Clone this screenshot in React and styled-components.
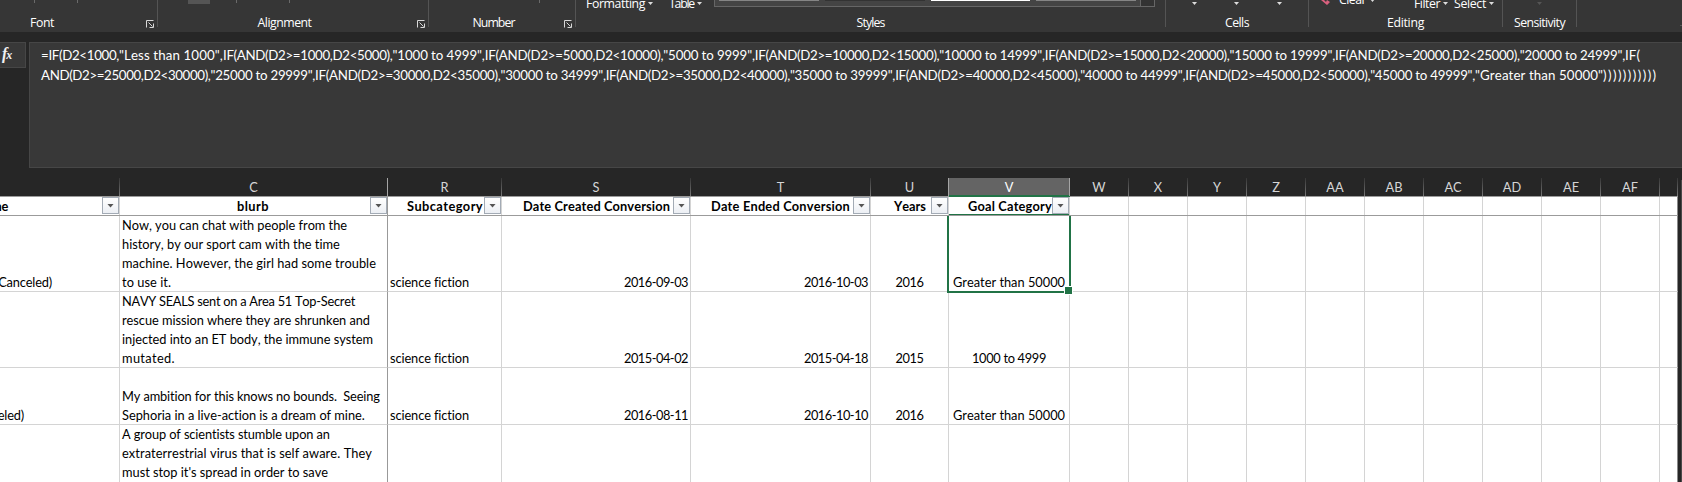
import React, { useLayoutEffect, useRef, useState } from "react";
import styled, { createGlobalStyle } from "styled-components";

const Global = createGlobalStyle`
  * { box-sizing: border-box; }
  html, body { margin: 0; background: #262626; overflow: hidden; }
`;

const Window = styled.div`
  width: 1682px;
  height: 482px;
  overflow: hidden;
  display: flex;
  flex-direction: column;
  background: #262626;
  font-family: Lato, sans-serif;
  font-kerning: none;
`;

/* text whose tracking is tuned so that it fills a known advance width */
const Tracked = styled.span`
  display: inline-block;
  white-space: pre;
`;
function Fit({ w, children }) {
  const ref = useRef(null);
  const [ls, setLs] = useState(0);
  useLayoutEffect(() => {
    const natural = ref.current.getBoundingClientRect().width;
    setLs((w - natural) / String(children).length);
  }, []);
  return <Tracked ref={ref} style={{ letterSpacing: ls + "px" }}>{children}</Tracked>;
}

/* ---------- ribbon ---------- */
const Ribbon = styled.div`
  display: flex;
  height: 32px;
  flex: none;
  background: #363636;
  color: #fff;
  font-family: "Open Sans", "Noto Sans", sans-serif;
  font-size: 12.3px;
`;
const Group = styled.div`
  flex: none;
  width: ${(p) => p.$w}px;
  margin-left: ${(p) => p.$ml || 0}px;
  height: 27px;
  border-right: 1px solid #545454;
  display: flex;
  flex-direction: column;
`;
const Tools = styled.div`
  height: 15px;
  display: flex;
  align-items: flex-start;
  overflow: hidden;
`;
const GroupFoot = styled.div`
  display: flex;
  height: 12px;
  align-items: center;
`;
const GroupName = styled.div`
  flex: 1;
  text-align: center;
  line-height: 16px;
  margin-top: 4px;
`;
const Launcher = styled.svg`
  width: 8px;
  height: 8px;
  margin: 5px 3px 0 6px;
  flex: none;
`;
const Tick = styled.i`
  width: 1px;
  height: 3px;
  background: #6a6a6a;
  margin-left: ${(p) => p.$ml}px;
`;
const Pressed = styled.i`
  width: 22px;
  height: 4px;
  background: #555;
  margin-left: ${(p) => p.$ml}px;
`;
const ToolLabel = styled.span`
  line-height: 16px;
  margin-top: ${(p) => p.$mt ?? -4}px;
  margin-left: ${(p) => p.$ml}px;
`;
const Caret = styled.i`
  width: 5px;
  height: 3px;
  background: ${(p) => (p.$dim ? "#555" : "#dcdcdc")};
  clip-path: polygon(0 0, 100% 0, 50% 100%);
  margin-left: ${(p) => p.$ml}px;
  margin-top: ${(p) => p.$mt ?? 2}px;
`;
const Gallery = styled.div`
  display: flex;
  width: 441px;
  height: 7px;
  margin-left: ${(p) => p.$ml}px;
  padding-left: 4px;
  gap: 6px;
  background: #444;
  border: 1px solid #666;
  border-top: 0;
`;
const Swatch = styled.i`
  width: 100px;
  height: 1px;
  background: ${(p) => p.$c};
`;
const GalleryMore = styled.i`
  width: 14px;
  margin-left: -2px;
  background: #333;
  border-left: 1px solid #666;
`;
const Eraser = styled.svg`
  width: 9px;
  height: 5px;
  margin-left: 12px;
`;
const Collapse = styled.svg`
  width: 8px;
  height: 5px;
  margin: 23px 0 0 103px;
`;

const LauncherIcon = () => (
  <Launcher viewBox="0 0 8 8" fill="none" stroke="#d8d8d8">
    <path d="M0.5 7.5V0.5H7.5M2.5 2.5L6.5 6.5M3.5 7.5H7.5V3.5" />
  </Launcher>
);

function RibbonGroup({ name, nameW, w, ml, launcher, children }) {
  return (
    <Group $w={w} $ml={ml}>
      <Tools>{children}</Tools>
      <GroupFoot>
        <GroupName><Fit w={nameW}>{name}</Fit></GroupName>
        {launcher && <LauncherIcon />}
      </GroupFoot>
    </Group>
  );
}

/* ---------- formula bar ---------- */
const FormulaBar = styled.div`
  display: flex;
  flex: none;
  height: 126px;
  margin-top: 10px;
`;
const Fx = styled.div`
  width: 26px;
  height: 26px;
  background: #383838;
  border: 1px solid #464646;
  border-left: 0;
  color: #f0f0f0;
  font: italic bold 16px/21px "Liberation Serif", serif;
  padding-left: 2px;
  margin-right: 3px;
  white-space: nowrap;
  sub { font-size: 12px; line-height: 0; vertical-align: 0; margin-left: -1px; }
`;
const FormulaBox = styled.div`
  flex: 1;
  background: #383838;
  border: 1px solid #464646;
  border-right: 0;
  color: #fff;
  font-size: 13.3px;
  line-height: 20px;
  padding: 2px 0 0 11px;
`;
const FormulaLine = styled.div`
  display: flex;
  height: 20px;
  white-space: pre;
`;

const formula = [
  [
    ["=IF(D2<1000,", 78],
    ['"Less than 1000",', 104],
    ["IF(AND(D2>=1000,D2<5000),", 169.5],
    ['"1000 to 4999",', 92.3],
    ["IF(AND(D2>=5000,D2<10000),", 178.5],
    ['"5000 to 9999",', 91.5],
    ["IF(AND(D2>=10000,D2<15000),", 184.5],
    ['"10000 to 14999",', 105.5],
    ["IF(AND(D2>=15000,D2<20000),", 184.7],
    ['"15000 to 19999",', 105.5],
    ["IF(AND(D2>=20000,D2<25000),", 184.7],
    ['"20000 to 24999",', 105.3],
    ["IF(", 15],
  ],
  [
    ["AND(D2>=25000,D2<30000),", 169.5],
    ['"25000 to 29999",', 104.6],
    ["IF(AND(D2>=30000,D2<35000),", 185.4],
    ['"30000 to 34999",', 105.2],
    ["IF(AND(D2>=35000,D2<40000),", 184.2],
    ['"35000 to 39999",', 105.2],
    ["IF(AND(D2>=40000,D2<45000),", 185],
    ['"40000 to 44999",', 105.2],
    ["IF(AND(D2>=45000,D2<50000),", 184.8],
    ['"45000 to 49999",', 104.9],
    ['"Greater than 50000"', 128],
    [")))))))))))", 54.5],
  ],
];

/* ---------- sheet ---------- */
const Sheet = styled.div`
  display: flex;
  flex: none;
  height: 304px;
  margin-top: 10px;
`;
const Grid = styled.div`
  width: 1678px;
  height: 304px;
  overflow: hidden;
  font-size: 12.8px;
  line-height: 19px;
  color: #000;
`;
const ScrollEdge = styled.div`
  width: 4px;
  margin-top: 2px;
  border-right: 1px solid #4a4a4a;
`;
const Row = styled.div`
  display: grid;
  grid-template-columns: 120px 268px 114px 189px 180px 78px 121px repeat(10, 59px) 18px;
  grid-template-rows: 100%;
  height: ${(p) => p.$h}px;
`;
const Letter = styled.div`
  display: flex;
  align-items: center;
  justify-content: center;
  padding-top: 1px;
  color: ${(p) => (p.$active ? "#fff" : "#d6d6d6")};
  background: ${(p) => (p.$active ? "#646464" : "transparent")};
  border-right: 1px solid;
  border-image: ${(p) =>
    p.$solid ? "linear-gradient(#a5a5a5, #a5a5a5) 1" : "linear-gradient(#333, #7a7a7a) 1"};
  box-shadow: ${(p) => (p.$active ? "inset 0 -1px #217346" : "none")};
`;
const HeadRow = styled(Row)`
  background: #fff;
  border-top: 1px solid #9b9b9b;
  border-bottom: 1px solid #9b9b9b;
  font-weight: bold;
`;
const lineColor = (p) => (p.$freeze ? "#999" : p.$edge ? "#8a8a8a" : "#d4d4d4");
const HeadCell = styled.div`
  position: relative;
  display: flex;
  justify-content: flex-end;
  border-right: 1px solid ${lineColor};
  padding-right: ${(p) => p.$pr || 0}px;
  box-shadow: ${(p) => (p.$active ? "0 -1px #217346, inset 0 -1px #217346" : "none")};
  white-space: pre;
`;
const FilterButton = styled.span`
  position: absolute;
  right: 0;
  top: 0;
  width: 17px;
  height: 17px;
  border: 1px solid #a3abb5;
  background: linear-gradient(#fff, #eceff4);
  display: flex;
  align-items: center;
  justify-content: center;
  &::after {
    content: "";
    width: 7px;
    height: 4px;
    background: #555;
    clip-path: polygon(0 0, 100% 0, 50% 100%);
  }
`;
const Cell = styled.div`
  position: relative;
  display: flex;
  flex-direction: column;
  justify-content: ${(p) => (p.$top ? "flex-start" : "flex-end")};
  align-items: ${(p) => p.$a || "flex-start"};
  padding: 0 ${(p) => p.$pr ?? 2}px 0 2px;
  border-right: 1px solid ${lineColor};
  border-bottom: 1px solid #d4d4d4;
  white-space: pre;
  ${Tracked}:last-of-type { margin-bottom: -1px; }
`;
const DataRowBox = styled(Row)`
  background: #fff;
`;
const Selection = styled.div`
  position: absolute;
  z-index: 2;
  left: -2px;
  top: 0;
  width: 124px;
  height: 77px;
  border: 2px solid #217346;
  border-top: 0;
  &::after {
    content: "";
    position: absolute;
    right: -4px;
    bottom: -4px;
    width: 7px;
    height: 7px;
    background: #217346;
    border: 1px solid #fff;
  }
`;

const letters = ["", "C", "R", "S", "T", "U", "V", "W", "X", "Y", "Z", "AA", "AB", "AC", "AD", "AE", "AF", ""];

const heads = [
  { t: "me", w: 17, pr: 111 },
  { t: "blurb", w: 32, pr: 118 },
  { t: "Subcategory", w: 76, pr: 18 },
  { t: "Date Created Conversion", w: 147, pr: 20 },
  { t: "Date Ended Conversion", w: 139, pr: 20 },
  { t: "Years", w: 32, pr: 22 },
  { t: "Goal Category", w: 84, pr: 17 },
];

const rows = [
  {
    h: 76, name: ["(Canceled)", 57, 67],
    blurb: [
      ["Now, you can chat with people from the", 225],
      ["history, by our sport cam with the time", 218],
      ["machine. However, the girl had some trouble", 254],
      ["to use it.", 49],
    ],
    start: "2016-09-03", end: "2016-10-03", year: "2016", goal: ["Greater than 50000", 112], sel: true,
  },
  {
    h: 76, name: null,
    blurb: [
      ["NAVY SEALS sent on a Area 51 Top-Secret", 233],
      ["rescue mission where they are shrunken and", 248],
      ["injected into an ET body, the immune system", 251],
      ["mutated.", 53],
    ],
    start: "2015-04-02", end: "2015-04-18", year: "2015", goal: ["1000 to 4999", 74],
  },
  {
    h: 57, name: ["(Canceled)", 57, 95],
    blurb: [
      ["My ambition for this knows no bounds.  Seeing", 258],
      ["Sephoria in a live-action is a dream of mine.", 243],
    ],
    start: "2016-08-11", end: "2016-10-10", year: "2016", goal: ["Greater than 50000", 112],
  },
  {
    h: 76, top: true,
    blurb: [
      ["A group of scientists stumble upon an", 208],
      ["extraterrestrial virus that is self aware. They", 250],
      ["must stop it's spread in order to save", 206],
    ],
  },
];

function DataRow({ r }) {
  return (
    <DataRowBox $h={r.h}>
      <Cell $a="flex-end" $pr={r.name ? r.name[2] : 2}>{r.name && <Fit w={r.name[1]}>{r.name[0]}</Fit>}</Cell>
      <Cell $freeze $top={r.top}>
        {r.blurb.map(([t, w]) => <Fit key={t} w={w}>{t}</Fit>)}
      </Cell>
      <Cell>{r.start && <Fit w={79}>science fiction</Fit>}</Cell>
      <Cell $a="flex-end">{r.start && <Fit w={64}>{r.start}</Fit>}</Cell>
      <Cell $a="flex-end">{r.end && <Fit w={64}>{r.end}</Fit>}</Cell>
      <Cell $a="center">{r.year && <Fit w={28}>{r.year}</Fit>}</Cell>
      <Cell $a="center">
        {r.goal && <Fit w={r.goal[1]}>{r.goal[0]}</Fit>}
        {r.sel && <Selection />}
      </Cell>
      {letters.slice(7).map((l, i) => <Cell key={i} $edge={l === ""} />)}
    </DataRowBox>
  );
}

export default function App() {
  return (
    <Window>
      <Global />
      <Ribbon>
        <RibbonGroup name="Font" nameW={24} w={214} ml={-56} launcher>
          <Tick $ml={90} /><Tick $ml={42} />
        </RibbonGroup>
        <RibbonGroup name="Alignment" nameW={54} w={271} launcher>
          <Pressed $ml={30} /><Tick $ml={26} /><Tick $ml={52} />
        </RibbonGroup>
        <RibbonGroup name="Number" nameW={42} w={147} launcher>
          <Tick $ml={110} />
        </RibbonGroup>
        <RibbonGroup name="Styles" nameW={28} w={590}>
          <ToolLabel $ml={10}><Fit w={59}>Formatting</Fit></ToolLabel>
          <Caret $ml={3} />
          <ToolLabel $ml={16}><Fit w={25}>Table</Fit></ToolLabel>
          <Caret $ml={3} />
          <Gallery $ml={12}>
            <Swatch $c="#858585" /><Swatch $c="#333" /><Swatch $c="#fff" /><Swatch $c="#858585" />
            <GalleryMore />
          </Gallery>
        </RibbonGroup>
        <RibbonGroup name="Cells" nameW={24} w={143}>
          <Caret $ml={26} /><Caret $ml={37} /><Caret $ml={38} />
        </RibbonGroup>
        <RibbonGroup name="Editing" nameW={37} w={194}>
          <Eraser viewBox="0 0 9 5"><path d="M0 0H3L5 2L6 0L9 2L6 5Z" fill="#d9607e" /></Eraser>
          <ToolLabel $ml={9} $mt={-8}><Fit w={27}>Clear</Fit></ToolLabel>
          <Caret $ml={4} $mt={-1} />
          <ToolLabel $ml={39}><Fit w={26}>Filter</Fit></ToolLabel>
          <Caret $ml={3} />
          <ToolLabel $ml={6}><Fit w={32}>Select</Fit></ToolLabel>
          <Caret $ml={3} />
        </RibbonGroup>
        <RibbonGroup name="Sensitivity" nameW={51} w={74}>
          <Caret $ml={34} $dim />
        </RibbonGroup>
        <Collapse viewBox="0 0 8 5" fill="none" stroke="#ddd"><path d="M0.5 4L4 0.8L7.5 4" /></Collapse>
      </Ribbon>

      <FormulaBar>
        <Fx>f<sub>x</sub></Fx>
        <FormulaBox>
          {formula.map((line, i) => (
            <FormulaLine key={i}>
              {line.map(([t, w]) => <Fit key={t} w={w}>{t}</Fit>)}
            </FormulaLine>
          ))}
        </FormulaBox>
      </FormulaBar>

      <Sheet>
        <Grid>
          <Row $h={18}>
            {letters.map((l, i) => (
              <Letter key={i} $active={l === "V"} $solid={l === "C" || l === "U" || l === "V"}>{l}</Letter>
            ))}
          </Row>
          <HeadRow $h={20}>
            {letters.map((l, i) => {
              const h = heads[i];
              return (
                <HeadCell key={i} $pr={h?.pr} $freeze={l === "C"} $active={l === "V"} $edge={i === 17}>
                  {h && <Fit w={h.w}>{h.t}</Fit>}
                  {h && <FilterButton />}
                </HeadCell>
              );
            })}
          </HeadRow>
          {rows.map((r, i) => <DataRow key={i} r={r} />)}
        </Grid>
        <ScrollEdge />
      </Sheet>
    </Window>
  );
}
